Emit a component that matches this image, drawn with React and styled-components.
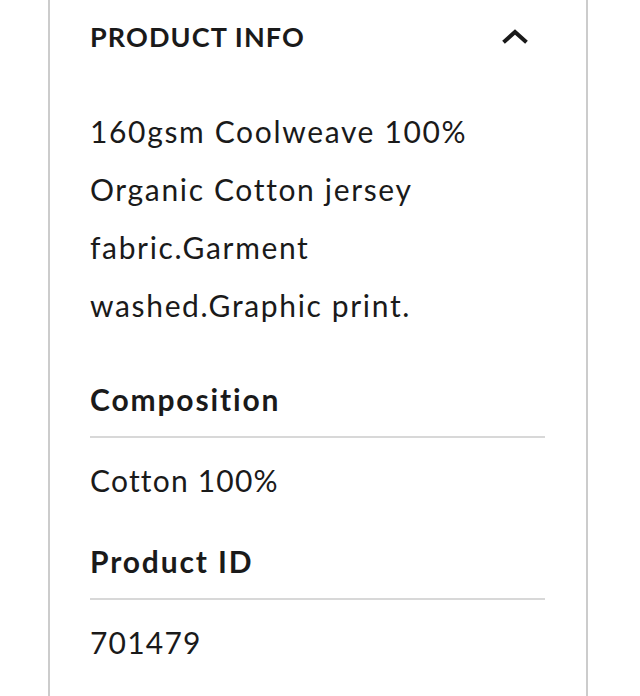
import styled, { createGlobalStyle } from "styled-components";

const GlobalStyle = createGlobalStyle`
  html, body {
    margin: 0;
    padding: 0;
    background: #fff;
  }
  body {
    font-family: "Lato", "Open Sans", sans-serif;
    color: #1a1a1a;
  }
`;

const specs = [
  { label: "Composition", value: "Cotton 100%" },
  { label: "Product ID", value: "701479" },
];

export default function App() {
  return (
    <>
      <GlobalStyle />
      <Panel>
        <Header>
          <Title>PRODUCT INFO</Title>
          <Toggle aria-label="Collapse">
            <svg width="26" height="16" viewBox="0 0 26 16">
              <path
                d="M3 13 L13 4 L23 13"
                fill="none"
                stroke="#1a1a1a"
                strokeWidth="4"
                strokeLinecap="square"
              />
            </svg>
          </Toggle>
        </Header>
        <Description>
          160gsm Coolweave 100%
          <br />
          Organic Cotton jersey
          <br />
          fabric.Garment
          <br />
          washed.Graphic print.
        </Description>
        {specs.map((spec) => (
          <Spec key={spec.label}>
            <SpecLabel>{spec.label}</SpecLabel>
            <SpecValue>{spec.value}</SpecValue>
          </Spec>
        ))}
      </Panel>
    </>
  );
}

const Panel = styled.section`
  box-sizing: border-box;
  width: 540px;
  min-height: 696px;
  margin-left: 48px;
  padding: 0 41px 0 40px;
  border-left: 2px solid #cccccc;
  border-right: 2px solid #cccccc;
`;

const Header = styled.div`
  display: flex;
  align-items: center;
  justify-content: space-between;
  height: 72px;
`;

const Title = styled.h2`
  margin: 0;
  font-size: 27px;
  font-weight: 700;
  letter-spacing: 1.1px;
`;

const Toggle = styled.button`
  display: flex;
  align-items: center;
  justify-content: center;
  width: 42px;
  height: 42px;
  padding: 0;
  margin-right: 9px;
  border: none;
  background: none;
  cursor: pointer;
`;

const Description = styled.p`
  margin: 30px 0 0;
  font-size: 30px;
  line-height: 58px;
  font-weight: 400;
  letter-spacing: 1.65px;
`;

const Spec = styled.div`
  margin-top: 45px;

  & + & {
    margin-top: 41px;
  }
`;

const SpecLabel = styled.h3`
  margin: 0;
  padding-bottom: 17px;
  font-size: 30px;
  line-height: 40px;
  font-weight: 700;
  letter-spacing: 1.85px;
  border-bottom: 2px solid #d8d8d8;
`;

const SpecValue = styled.div`
  padding-top: 22px;
  font-size: 30px;
  line-height: 40px;
  font-weight: 400;
  letter-spacing: 1.2px;
`;
